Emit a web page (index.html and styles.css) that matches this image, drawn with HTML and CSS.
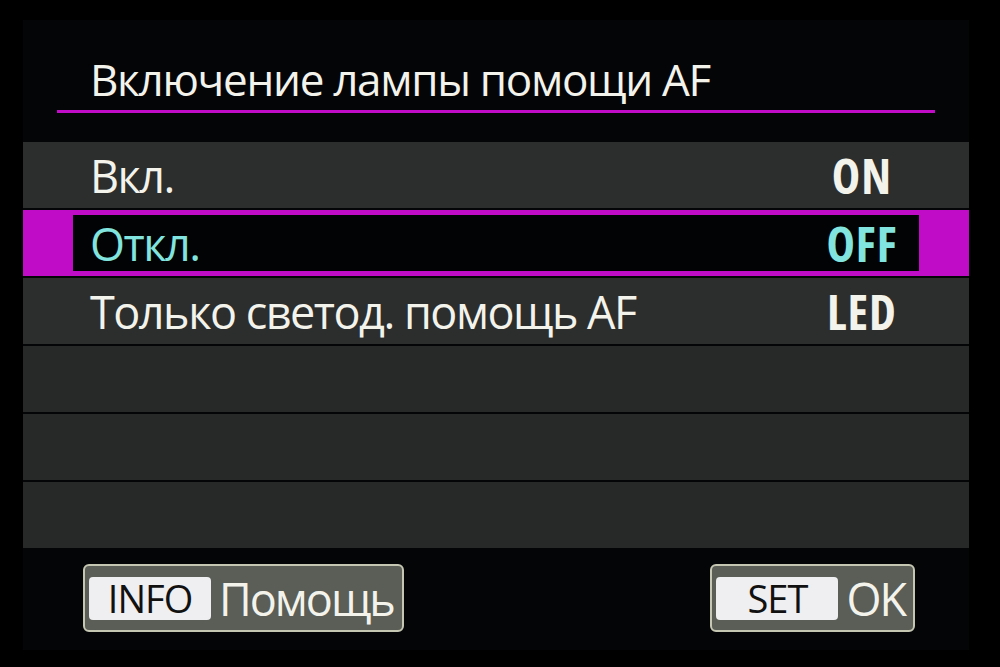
FILE: index.html
```html
<!DOCTYPE html>
<html lang="ru">
<head>
  <meta charset="UTF-8">
  <title>Включение лампы помощи AF</title>
  <link rel="stylesheet" href="styles.css">
</head>
<body>
  <div class="screen">
    <div class="header">
      <h1 class="title">Включение лампы помощи AF</h1>
      <div class="underline"></div>
    </div>
    <div class="menu">
      <div class="row">
        <span class="label">Вкл.</span>
        <span class="value">ON</span>
      </div>
      <div class="row selected">
        <div class="inner">
          <span class="label">Откл.</span>
          <span class="value">OFF</span>
        </div>
      </div>
      <div class="row">
        <span class="label">Только светод. помощь AF</span>
        <span class="value">LED</span>
      </div>
      <div class="row empty"></div>
      <div class="row empty"></div>
      <div class="row empty"></div>
    </div>
    <div class="footer">
      <div class="btn">
        <span class="key">INFO</span>
        <span class="action">Помощь</span>
      </div>
      <div class="btn">
        <span class="key">SET</span>
        <span class="action">OK</span>
      </div>
    </div>
  </div>
</body>
</html>
```

FILE: styles.css
```css
body {
  margin: 0;
  background-color: #000;
  font-family: "Open Sans", "Noto Sans", sans-serif;
  color: #f3f3ec;
}

.screen {
  margin: 20px 0 0 23px;
  width: 946px;
  height: 630px;
  background-color: #040507;
  display: flex;
  flex-direction: column;
}

.header {
  height: 122px;
  padding: 0 34px;
  box-sizing: border-box;
  display: flex;
  flex-direction: column;
  justify-content: flex-end;
}

.title {
  margin: 0 0 6px 33px;
  font-size: 44px;
  font-weight: normal;
  letter-spacing: -1.3px;
  line-height: 50px;
}

.underline {
  height: 3px;
  background-color: #c00cc6;
  margin-bottom: 29px;
}

.menu {
  display: flex;
  flex-direction: column;
  gap: 2px;
}

.row {
  height: 66px;
  background-color: #2c2e2d;
  display: flex;
  align-items: center;
  padding: 0 57px 0 67px;
  box-sizing: border-box;
  font-size: 45px;
  letter-spacing: -1.5px;
}

.row.empty {
  background-color: #272928;
}

.label {
  flex: 1;
}

.value {
  width: 100px;
  text-align: center;
  font-size: 48px;
  font-weight: bold;
  font-stretch: condensed;
  letter-spacing: 1px;
}

.row.selected {
  background-color: #c00cc6;
  padding: 5px 50px;
}

.inner {
  flex: 1;
  height: 100%;
  background-color: #020304;
  display: flex;
  align-items: center;
  padding: 0 7px 0 17px;
  color: #82e4de;
}

.footer {
  flex: 1;
  display: flex;
  justify-content: space-between;
  padding: 16px 54px 0 60px;
}

.btn {
  height: 68px;
  box-sizing: border-box;
  border: 2px solid #c6c7b3;
  border-radius: 6px;
  background-color: #5a5e57;
  display: flex;
  align-items: center;
  padding: 0 8px 0 4px;
  gap: 8px;
}

.key {
  width: 122px;
  height: 43px;
  background-color: #efeef0;
  border-radius: 4px;
  color: #111;
  font-size: 38px;
  letter-spacing: -1px;
  line-height: 43px;
  text-align: center;
}

.action {
  font-size: 45px;
  letter-spacing: -2px;
  line-height: 1;
}
```
